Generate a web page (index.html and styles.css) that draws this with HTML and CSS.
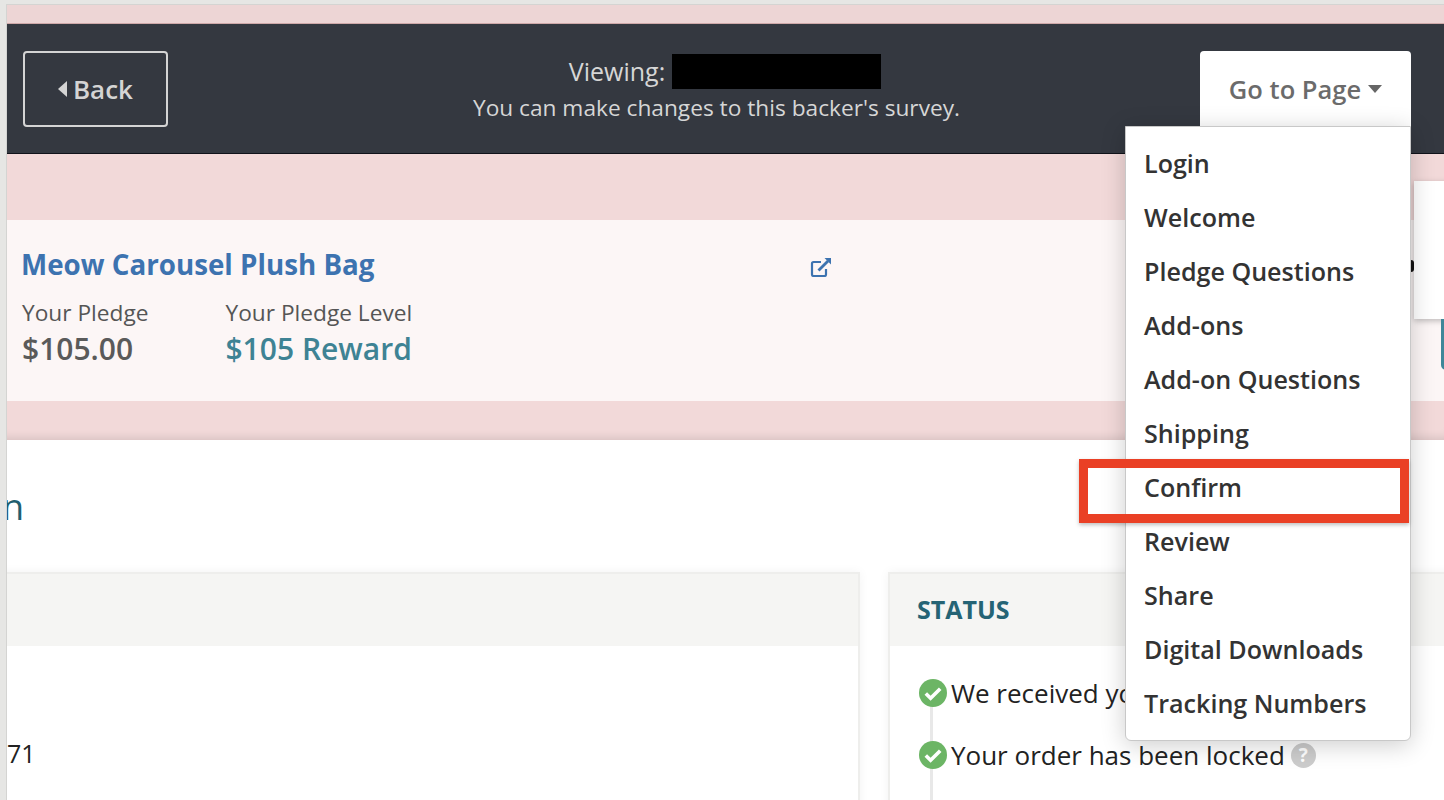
FILE: index.html
```html
<!DOCTYPE html>
<html lang="en">
<head>
    <meta charset="UTF-8">
    <meta name="viewport" content="width=device-width, initial-scale=1.0">
    <title>Backer Survey</title>
    <link rel="stylesheet" href="styles.css">
</head>
<body>
    <div class="page">
        <div class="top-strip"></div>

        <div class="admin-bar">
            <a class="btn-back" href="#">
                <svg class="caret-left" viewBox="0 0 9 16"><path d="M9 0v16L0 8z"/></svg>
                Back
            </a>
            <div class="viewing">
                <div class="viewing-name">Viewing: <span class="redacted"></span></div>
                <div>You can make changes to this backer's survey.</div>
            </div>
            <a class="btn-goto" href="#">
                Go to Page
                <svg class="caret-down" viewBox="0 0 14 8"><path d="M0 0h14L7 8z"/></svg>
            </a>
        </div>

        <div class="pledge-wrap">
            <div class="pledge">
                <div class="pledge-head">
                    <a class="project-name" href="#">Meow Carousel Plush Bag</a>
                    <svg class="ext-link" viewBox="0 0 22 20" fill="none" stroke="#3d73b0">
                        <path d="M16 12V17.500a1.500 1.500 0 0 1-1.500 1.500H3.500A1.500 1.500 0 0 1 2 17.500V6.500A1.500 1.500 0 0 1 3.500 5H11" stroke-width="2.200"/>
                        <path d="M8.500 13.500 18 4" stroke-width="2.800"/>
                        <path d="M14.500 1H21V7.500Z" fill="#3d73b0" stroke="none"/>
                    </svg>
                </div>
                <div class="pledge-stats">
                    <div>
                        <div class="stat-label">Your Pledge</div>
                        <div class="stat-value">$105.00</div>
                    </div>
                    <div>
                        <div class="stat-label">Your Pledge Level</div>
                        <div class="stat-value teal">$105 Reward</div>
                    </div>
                </div>
            </div>
        </div>

        <div class="content">
            <h2 class="page-title">n</h2>
            <div class="panels">
                <div class="panel panel-left">
                    <div class="panel-head"></div>
                    <div class="panel-body">
                        <div class="clipped-line">71</div>
                        <div class="clipped-line cut">n</div>
                    </div>
                </div>
                <div class="panel panel-right">
                    <div class="panel-head"><h3>STATUS</h3></div>
                    <div class="panel-body status-list">
                        <div class="status-row">
                            <svg class="check" viewBox="0 0 28 28"><circle cx="14" cy="14" r="14" fill="#6cb565"/><path d="M6.800 14.500l4.800 4.800 9.600-9.600" fill="none" stroke="#fff" stroke-width="3.600"/></svg>
                            <span>We received your order</span>
                        </div>
                        <div class="status-row">
                            <svg class="check" viewBox="0 0 28 28"><circle cx="14" cy="14" r="14" fill="#6cb565"/><path d="M6.800 14.500l4.800 4.800 9.600-9.600" fill="none" stroke="#fff" stroke-width="3.600"/></svg>
                            <span>Your order has been locked</span>
                            <span class="help">?</span>
                        </div>
                    </div>
                </div>
            </div>
        </div>

        <!-- things that sit on top of the page -->
        <div class="side-popover"></div>
        <div class="side-btn"></div>
        <div class="behind-mark"></div>

        <ul class="dropdown">
            <li>Login</li>
            <li>Welcome</li>
            <li>Pledge Questions</li>
            <li>Add-ons</li>
            <li>Add-on Questions</li>
            <li>Shipping</li>
            <li>Confirm</li>
            <li>Review</li>
            <li>Share</li>
            <li>Digital Downloads</li>
            <li>Tracking Numbers</li>
        </ul>

        <div class="highlight"></div>
    </div>
</body>
</html>
```

FILE: styles.css
```css
* {
    margin: 0;
    padding: 0;
    box-sizing: border-box;
}

html, body {
    height: 100%;
    overflow: hidden;
}

body {
    font-family: "Open Sans", "Noto Sans", sans-serif;
    background: #e6e6e4;
    color: #222;
    font-size: 26px;
    padding: 4px 0 0 6px;
}

a {
    text-decoration: none;
}

.page {
    position: relative;
    height: 796px;
    background: #fff;
    overflow: hidden;
    border-left: 1px solid #d4d4d2;
    border-top: 1px solid #d4d4d2;
}

.top-strip {
    height: 19px;
    background: #edd5d5;
    border-bottom: 1px solid #cfa9a9;
}

.admin-bar {
    display: flex;
    align-items: flex-start;
    height: 130px;
    padding: 27px 33px 0 16px;
    background: #343840;
    border-bottom: 1px solid #10131a;
}

.btn-back {
    display: flex;
    align-items: center;
    justify-content: center;
    gap: 6px;
    width: 145px;
    height: 76px;
    border: 2px solid #d4d4d4;
    border-radius: 4px;
    color: #d4d4d4;
    font-weight: 600;
    font-size: 26px;
}

.caret-left {
    width: 9px;
    height: 16px;
    fill: #d4d4d4;
}

.viewing {
    flex: 1;
    padding-left: 65px;
    text-align: center;
    color: #d6d6d6;
    font-size: 22.700px;
    line-height: 36px;
}

.viewing-name {
    font-size: 25px;
    display: flex;
    align-items: center;
    justify-content: center;
    gap: 7px;
    height: 39px;
    padding: 1px 0 0 17px;
}

.redacted {
    display: inline-block;
    width: 209px;
    height: 35px;
    background: #000;
}

.btn-goto {
    display: flex;
    align-items: center;
    justify-content: center;
    gap: 7px;
    width: 211px;
    height: 76px;
    background: #fff;
    border-radius: 4px 4px 0 0;
    color: #6b6b6b;
    font-size: 25.500px;
    font-weight: 600;
}

.caret-down {
    width: 14px;
    height: 8px;
    fill: #666;
}

.pledge-wrap {
    padding: 66px 0 39px;
    background: #f2d9d9;
    box-shadow: inset 0 -10px 10px -8px rgba(0, 0, 0, 0.12);
}

.pledge {
    height: 181px;
    padding: 25px 0 0 14px;
    background: #fcf6f6;
}

.pledge-head {
    display: flex;
    align-items: center;
}

.project-name {
    width: 789px;
    color: #3d73b0;
    font-size: 27.750px;
    font-weight: 700;
    line-height: 38px;
}

.ext-link {
    width: 22px;
    height: 20px;
    margin-top: 6px;
}

.pledge-stats {
    display: flex;
    gap: 77px;
    margin-top: 12px;
    padding-left: 1px;
}

.stat-label {
    color: #555;
    font-size: 22.700px;
    line-height: 36px;
}

.stat-value {
    color: #5a5a5a;
    font-size: 30px;
    font-weight: 600;
    line-height: 36px;
}

.stat-value.teal {
    color: #3e8394;
}

.content {
    padding-top: 43px;
}

.page-title {
    color: #215e6e;
    font-size: 36px;
    font-weight: 400;
    line-height: 48px;
    height: 89px;
    margin-left: -5px;
}

.panels {
    display: flex;
    gap: 28px;
}

.panel {
    flex: none;
    height: 400px;
    border: 2px solid #eeeeec;
    box-shadow: 0 0 10px rgba(0, 0, 0, 0.05);
}

.panel-left {
    width: 875px;
    margin-left: -22px;
}

.panel-right {
    width: 700px;
}

.panel-head {
    height: 72px;
    padding: 18px 0 0 27px;
    background: #f5f5f3;
}

.panel-head h3 {
    color: #256475;
    font-size: 25px;
    font-weight: 700;
    line-height: 34px;
}

.panel-left .panel-body {
    padding: 89px 0 0 20px;
    color: #222;
    font-size: 25px;
    line-height: 36px;
}

.clipped-line {
    margin-bottom: 18px;
}

.clipped-line.cut {
    margin-left: -10px;
}

.status-list {
    position: relative;
    padding: 30px 0 0 29px;
    font-size: 26px;
}

/* timeline line behind the checks */
.status-list::before {
    content: "";
    position: absolute;
    left: 40px;
    top: 47px;
    width: 3px;
    height: 200px;
    background: #e8e8e8;
}

.status-row {
    position: relative;
    display: flex;
    align-items: center;
    gap: 4px;
    height: 34px;
    margin-bottom: 28px;
    color: #222;
}

.check {
    width: 28px;
    height: 28px;
    flex: none;
}

.help {
    display: inline-flex;
    align-items: center;
    justify-content: center;
    width: 25px;
    height: 25px;
    margin-left: 2px;
    border-radius: 50%;
    background: #ccc;
    color: #fff;
    font-size: 19px;
    font-weight: 700;
}

.side-popover {
    position: absolute;
    left: 1407px;
    top: 176px;
    width: 60px;
    height: 138px;
    background: #fff;
    box-shadow: 0 2px 6px rgba(0, 0, 0, 0.25);
}

.side-btn {
    position: absolute;
    left: 1434px;
    top: 314px;
    width: 40px;
    height: 51px;
    background: #3e8799;
    border-radius: 0 0 0 5px;
}

/* end of a glyph showing through the gap beside the menu */
.behind-mark {
    position: absolute;
    left: 1404px;
    top: 255px;
    width: 3px;
    height: 12px;
    background: #111;
    border-radius: 0 3px 3px 0;
}

.dropdown {
    position: absolute;
    left: 1118px;
    top: 121px;
    width: 286px;
    height: 615px;
    padding-top: 9px;
    list-style: none;
    background: #fff;
    border: 1px solid #c8c8c8;
    border-radius: 0 0 6px 6px;
    box-shadow: 0 4px 24px rgba(0, 0, 0, 0.2);
}

.dropdown li {
    height: 54px;
    padding-left: 18px;
    color: #333;
    font-size: 25.100px;
    font-weight: 600;
    line-height: 54px;
}

.highlight {
    position: absolute;
    left: 1072px;
    top: 454px;
    width: 330px;
    height: 64px;
    border: 9px solid #ea4025;
    box-shadow: 0 2px 4px rgba(0, 0, 0, 0.25);
}
```
